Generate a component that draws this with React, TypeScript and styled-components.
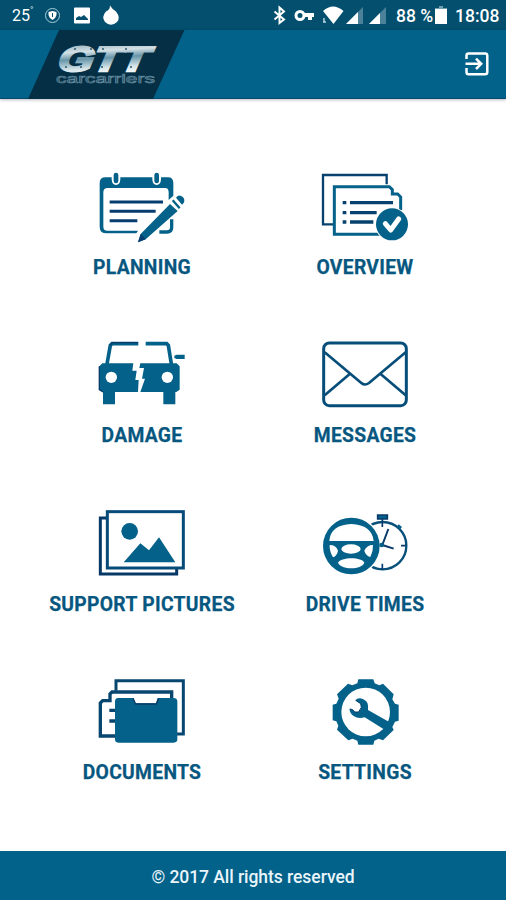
import React from "react";
import styled, { createGlobalStyle } from "styled-components";

const BLUE = "#046189";

const GlobalStyle = createGlobalStyle`
  *, *::before, *::after { box-sizing: border-box; }
  body { margin: 0; background: #fff; font-family: Roboto, "Liberation Sans", sans-serif; }
`;

const Screen = styled.div`
  width: 506px;
  height: 900px;
  display: flex;
  flex-direction: column;
  background: #fff;
  overflow: hidden;
`;

const StatusBar = styled.div`
  height: 30px;
  flex: none;
  display: flex;
  align-items: center;
  justify-content: space-between;
  background: #034f6d;
  color: #fff;
`;

const StatusDrawing = styled.svg`
  display: block;
  height: 30px;
  flex: none;
`;

const StatusGroup = styled.div`
  display: flex;
  align-items: center;
  height: 30px;
`;

const StatusText = styled.span<{ $left?: number; $width: number; $light?: boolean }>`
  margin-left: ${(p) => p.$left ?? 0}px;
  width: ${(p) => p.$width}px;
  padding-top: 2px;
  font-size: ${(p) => (p.$light ? 16 : 17.5)}px;
  font-weight: ${(p) => (p.$light ? 400 : 500)};
  line-height: 28px;
  white-space: nowrap;
`;

const Header = styled.header`
  height: 69px;
  flex: none;
  display: flex;
  align-items: center;
  justify-content: space-between;
  padding: 0 16px 0 28px;
  background: #02628a;
  border-bottom: 1px solid #034a6b;
  box-shadow: 0 1px 3px rgba(30, 20, 60, 0.3);
`;

const Logo = styled.svg`
  display: block;
  width: 157px;
  height: 69px;
`;

const ExitButton = styled.button`
  display: block;
  width: 26px;
  height: 26px;
  padding: 0;
  border: 0;
  background: none;
  svg { display: block; }
`;

const Menu = styled.main`
  flex: 1;
  display: grid;
  grid-template-columns: 223px 223px;
  grid-template-rows: repeat(4, 168.33px);
  padding: 67px 0 0 30.5px;
`;

const Tile = styled.div`
  display: flex;
  flex-direction: column;
  align-items: center;
`;

const TileIcon = styled.svg`
  display: block;
  width: 96px;
  height: 78px;
`;

const TileLabel = styled.span`
  margin-top: 12px;
  font-size: 19.3px;
  line-height: 24px;
  font-weight: 700;
  letter-spacing: 0.3px;
  color: #075780;
  -webkit-text-stroke: 0.25px #075780;
  white-space: nowrap;
`;

const Footer = styled.footer`
  height: 49px;
  flex: none;
  display: flex;
  align-items: center;
  justify-content: center;
  padding-top: 2px;
  background: #02628a;
  color: #e9f5fb;
  font-size: 17.5px;
  font-weight: 500;
  letter-spacing: -0.05px;
`;

const Planning = () => (
  <>
    <path d="M59 84V69Q59 52 76 52H95V58Q96 75 108 75Q120 75 121 58V52H217V58Q218 75 230 75Q242 75 243 58V52H264Q280 52 280 69V107L266 120V97Q266 84 255 84H83Q70 84 70 97V200Q70 212 82 212H174L169 220H80Q59 220 59 200Z" fill={BLUE} />
    <rect x="101" y="38" width="14" height="32" rx="7" fill={BLUE} />
    <rect x="223" y="38" width="14" height="32" rx="7" fill={BLUE} />
    <path d="M89 126H249M89 154H227M89 182H172" stroke="#073c70" strokeWidth="9" />
    <path d="M275 178V202Q275 216 261 216H238" fill="none" stroke={BLUE} strokeWidth="10" />
    <path d="M270 132L293 153L197 238L174 247L182 222ZM288 113L293 108Q301 104 309 112Q316 120 311 129L306 134Z" fill={BLUE} />
    <path d="M278 121L299 145" fill="none" stroke={BLUE} strokeWidth="7" />
    <path d="M182 222L197 238L174 247Z" fill="#073c70" />
  </>
);

const Overview = () => (
  <>
    <path d="M99 193H69V45H260V73" fill="none" stroke="#07426f" strokeWidth="7" />
    <path d="M240 223H103V80H268L277 89V102H293L302 111V151" fill="none" stroke={BLUE} strokeWidth="9" />
    <path d="M128 128H139M150 128H279M128 158H139M150 158H230M128 186H139M150 186H220" stroke="#07426f" strokeWidth="10" />
    <circle cx="276" cy="193" r="51" fill="#fff" />
    <circle cx="276" cy="193" r="48" fill={BLUE} />
    <path d="M256 191L272 210L296 177" fill="none" stroke="#fff" strokeWidth="15" strokeLinecap="round" strokeLinejoin="round" />
  </>
);

const Damage = () => (
  <>
    <path d="M175 42H96L91 47L81 103M197 42H260L265 47L274 103" fill="none" stroke={BLUE} strokeWidth="11" />
    <path d="M174 39H98L90 46" fill="none" stroke="#073b69" strokeWidth="4" />
    <path d="M283 78L290 75H314V88H290L283 85Z" fill={BLUE} />
    <path d="M67 101H160L157 123H170L166 151H176L174 187H105V224H69V187L58 181V110ZM181 101H290L299 110V180L289 187H286V224H250V187H181L195 147H186L192 115H178Z" fill={BLUE} />
    <path d="M58 110V180L69 187" fill="none" stroke="#073b69" strokeWidth="4" />
    <circle cx="94" cy="143" r="17" fill="#fff" />
    <circle cx="262" cy="143" r="17" fill="#fff" />
  </>
);

const Messages = () => (
  <g fill="none" stroke="#064e79" strokeWidth="8">
    <rect x="71" y="40" width="248" height="188" rx="17" strokeWidth="9" />
    <path d="M74 68L184 160Q195 169 207 160L317 68M150 132L74 197M241 132L317 197" />
  </g>
);

const Pictures = () => (
  <>
    <path d="M79 53H61V221H290V203" fill="none" stroke="#073966" strokeWidth="9" />
    <rect x="82" y="34" width="228" height="169" fill="none" stroke="#074b78" strokeWidth="9" />
    <circle cx="149" cy="93" r="25" fill={BLUE} />
    <path d="M131 186L181 129L207 150L237 111L286 186Z" fill={BLUE} />
  </>
);

const DriveTimes = () => (
  <>
    <circle cx="248" cy="136" r="71" fill="none" stroke="#07507a" strokeWidth="7" />
    <path d="M233 44H262V56H233ZM247 55V80M247 190V208M303 136H317" fill={BLUE} stroke="#073b69" strokeWidth="5" />
    <path d="M290 79L296 72L306 80L301 86Z" fill={BLUE} />
    <path d="M265 86L247 134L281 145" fill="none" stroke="#073b69" strokeWidth="6" />
    <circle cx="154" cy="137" r="89" fill="#fff" />
    <circle cx="154" cy="137" r="85" fill={BLUE} />
    <circle cx="245" cy="134" r="7" fill={BLUE} />
    <path d="M88 122Q91 74 154 71Q216 74 221 122Z" fill="#fff" />
    <path d="M89 134Q109 134 114 151Q111 166 99 171Q88 154 89 134ZM219 134Q200 134 193 151Q197 166 211 170Q220 153 219 134Z" fill="#fff" />
    <ellipse cx="153" cy="146" rx="29" ry="14" fill="#fff" />
    <path d="M114 187C122 169 187 169 193 187C185 209 123 209 114 187Z" fill="#fff" />
  </>
);

const Documents = () => (
  <>
    <path d="M108 68V38H310V198H291" fill="none" stroke="#07466f" strokeWidth="9" />
    <path d="M275 91V72H96L90 78V98H68L61 105V204H106M88 127H106M88 159H106" fill="none" stroke="#07466f" strokeWidth="10" />
    <path d="M114 90H161L165 106H228L233 90H281Q292 90 292 101V214Q292 224 281 224H115Q105 224 105 214V101Q105 90 114 90Z" fill={BLUE} />
    <path d="M159 91L167 108H229L236 91" fill="none" stroke="#073a65" strokeWidth="4" />
  </>
);

const Settings = () => (
  <>
    <path d="M172 46L175 34H220L224 46L238 52L249 47L281 79L277 94L285 107L296 110V158L285 161L277 177L281 186L249 217L236 212L223 218L220 230H175L172 218L158 212L145 217L111 185L115 173L109 160L98 157V110L109 107L116 92L111 79L144 47L157 52Z" fill={BLUE} />
    <circle cx="197" cy="132" r="73" fill="#fff" />
    <path d="M204 126L269 163L254 185L194 148Q174 154 161 144Q150 137 148 122L158 125L164 132H176L181 125L184 117L182 107L166 97Q175 87 190 94Q203 100 204 113Z" fill={BLUE} />
    <path d="M150 123L158 125L164 132H176L184 118L182 107L167 97" fill="none" stroke="#073f6d" strokeWidth="3" />
  </>
);

const tiles = [
  { label: "PLANNING", Icon: Planning, box: "42 18 288 234" },
  { label: "OVERVIEW", Icon: Overview, box: "51 18 288 234" },
  { label: "DAMAGE", Icon: Damage, box: "42 13 288 234" },
  { label: "MESSAGES", Icon: Messages, box: "51 13 288 234" },
  { label: "SUPPORT PICTURES", Icon: Pictures, box: "42 8 288 234" },
  { label: "DRIVE TIMES", Icon: DriveTimes, box: "51 8 288 234" },
  { label: "DOCUMENTS", Icon: Documents, box: "42 9 288 234" },
  { label: "SETTINGS", Icon: Settings, box: "51 9 288 234" },
];

export default function App() {
  return (
    <Screen>
      <GlobalStyle />
      <StatusBar>
        <StatusGroup>
          <StatusText $left={12} $width={18} $light>25</StatusText>
          <StatusDrawing width="92" viewBox="0 0 92 30">
            <circle cx="1.8" cy="7.5" r="1" fill="none" stroke="#bcd8e5" strokeWidth=".8" />
            <circle cx="22.5" cy="15.5" r="7" fill="none" stroke="#a7cede" />
            <path d="M18.5 12L22.5 11L26.5 12V15Q26 18 22.5 20Q19 18 18.5 15Z" fill="#fff" />
            <path d="M22.5 13V17" stroke="#034f6d" />
            <rect x="44" y="7.5" width="16" height="16" rx="1" fill="#fff" />
            <path d="M46 20V18L49 16L51 17L54 15L58 19V20Z" fill="#034f6d" />
            <path d="M80 5.5Q82 9 86 11.5Q91 18 87 22Q81 27.5 75 22Q71 17 76 11.5Q80 10 80 5.5Z" fill="#fff" />
          </StatusDrawing>
        </StatusGroup>
        <StatusGroup>
          <StatusDrawing width="121" viewBox="270 0 121 30">
            <path d="M274.5 11.5L284 19.5L279.5 23V7.5L284 11.5L274.5 19.5" fill="none" stroke="#fff" strokeWidth="2" />
            <circle cx="300" cy="15.5" r="4" fill="none" stroke="#fff" strokeWidth="3" />
            <path d="M304 13H314V17H312V20H308V17H304Z" fill="#fff" />
            <path d="M323 11Q333 2 343.5 11L333.5 24Z" fill="#fff" />
            <path d="M324 18V22M323 22H326" stroke="#b7d3df" strokeWidth="1.5" />
            <path d="M346 24L363 7V24Z" fill="#4b8299" />
            <path d="M346 24L358 12V24Z" fill="#fff" />
            <path d="M369 24L386 7V24Z" fill="#4b8299" />
            <path d="M369 24L380 13V24Z" fill="#fff" />
          </StatusDrawing>
          <StatusText $left={5} $width={38}>88 %</StatusText>
          <StatusDrawing width="14" viewBox="434 0 14 30">
            <path d="M435 8H439V6H443V8H447V24H435Z" fill="#fff" />
            <path d="M435 8H439V6H443V8H447V9H435Z" fill="#6d9eb1" />
          </StatusDrawing>
          <StatusText $left={7} $width={51}>18:08</StatusText>
        </StatusGroup>
      </StatusBar>
      <Header>
        <Logo viewBox="28 30 157 69" role="img" aria-label="GTT carcarriers">
          <defs>
            <linearGradient id="chrome" x1="0" y1="0" x2="0.15" y2="1">
              <stop offset="0.1" stopColor="#8fabb8" />
              <stop offset="0.35" stopColor="#d3e0e5" />
              <stop offset="0.54" stopColor="#6895a9" />
              <stop offset="0.8" stopColor="#d5e5e9" />
              <stop offset="1" stopColor="#fff" />
            </linearGradient>
          </defs>
          <path d="M59 30H184.5L153 99H28Z" fill="#052f45" />
          <g transform="translate(57 70.5) skewX(-10)">
            <text x="0" y="0" fontFamily="Liberation Sans" fontStyle="italic" fontWeight="700" fontSize="34.5" textLength="90" lengthAdjust="spacingAndGlyphs" fill="url(#chrome)" stroke="url(#chrome)" strokeWidth="2.6">GTT</text>
          </g>
          <text x="56" y="83" fontFamily="Liberation Sans" fontSize="12.5" textLength="99" lengthAdjust="spacingAndGlyphs" fill="#163d52" stroke="#628c9f" strokeWidth=".6">carcarriers</text>
          <g fill="#31596c">
            <circle cx="75" cy="49" r="1" /><circle cx="91" cy="49" r="1" />
            <circle cx="66" cy="67" r="1" /><circle cx="81" cy="67" r="1" />
            <circle cx="103" cy="49" r="1" /><circle cx="126" cy="49" r="1" />
            <circle cx="102" cy="67" r="1" /><circle cx="131" cy="67" r="1" />
          </g>
        </Logo>
        <ExitButton aria-label="Log out">
          <svg width="26" height="26" viewBox="0 0 26 26" fill="none" stroke="#fff" strokeWidth="2.5">
            <path d="M2.5 8V4.5Q2.5 2.5 4.5 2.5H21Q23.3 2.5 23.3 4.7V21Q23.3 23.3 21 23.3H4.5Q2.5 23.3 2.5 21V17" />
            <path d="M1.5 12.8H16M12 7.6L17.2 12.8L12 18" />
          </svg>
        </ExitButton>
      </Header>
      <Menu>
        {tiles.map(({ label, Icon, box }) => (
          <Tile key={label}>
            <TileIcon viewBox={box} aria-hidden="true"><Icon /></TileIcon>
            <TileLabel>{label}</TileLabel>
          </Tile>
        ))}
      </Menu>
      <Footer>© 2017 All rights reserved</Footer>
    </Screen>
  );
}
